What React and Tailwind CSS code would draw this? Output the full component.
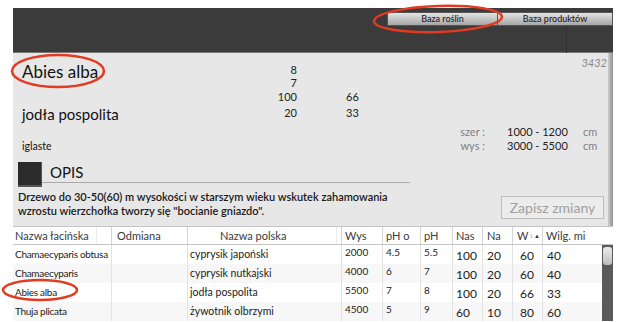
import React from 'react'

const rows = [
  { latin: 'Chamaecyparis obtusa', pl: 'cyprysik japoński', wys: '2000', pho: '4.5', ph: '5.5', nas: '100', na: '20', w: '60', wilg: '40' },
  { latin: 'Chamaecyparis', pl: 'cyprysik nutkajski', wys: '4000', pho: '6', ph: '7', nas: '100', na: '20', w: '60', wilg: '40' },
  { latin: 'Abies alba', pl: 'jodła pospolita', wys: '5500', pho: '7', ph: '8', nas: '100', na: '20', w: '66', wilg: '33' },
  { latin: 'Thuja plicata', pl: 'żywotnik olbrzymi', wys: '4500', pho: '5', ph: '9', nas: '60', na: '10', w: '80', wilg: '60' },
]

function TopBar() {
  return (
    <div className="h-[45px] bg-[#3b3b3b] border-b border-[#777] flex flex-col">
      <div className="flex justify-end pt-[4px]">
        <button className="w-[111px] h-[14px] bg-gradient-to-b from-[#e4e4e4] to-[#a6a6a6] border border-[#555] text-[9px] leading-[12px] text-[#222] font-medium">
          Baza roślin
        </button>
        <button className="w-[115px] h-[14px] bg-gradient-to-b from-[#e4e4e4] to-[#a6a6a6] border border-l-0 border-[#555] text-[9px] leading-[12px] text-[#222] font-medium">
          Baza produktów
        </button>
      </div>
      <div className="flex justify-end mt-[1px]">
        <div className="w-[1px] h-[26px] bg-[#303030] mr-[46px]" />
      </div>
    </div>
  )
}

function Details() {
  return (
    <div className="h-[173px] flex bg-[#e7e7e7]">
      <div className="flex-1 flex flex-col">
        <div className="h-[106px] flex">
          <div className="w-[190px] pl-[9px] flex flex-col text-[#111]">
            <div className="mt-[8px] text-[17px] leading-[22px]">Abies alba</div>
            <div className="mt-[21px] text-[15px] leading-[20px]">jodła pospolita</div>
            <div className="mt-[15px] text-[10.5px] leading-[14px]">iglaste</div>
          </div>
          <div className="w-[94px] flex flex-col text-right text-[11px] text-[#222]">
            <div className="h-[14px] leading-[14px] mt-[10px]">8</div>
            <div className="h-[14px] leading-[14px] mt-[-1px]">7</div>
            <div className="h-[14px] leading-[14px]">100</div>
            <div className="h-[14px] leading-[14px] mt-[2px]">20</div>
          </div>
          <div className="w-[20px] ml-[49px] flex flex-col text-[11px] text-[#222]">
            <div className="h-[14px] leading-[14px] mt-[37px]">66</div>
            <div className="h-[14px] leading-[14px] mt-[2px]">33</div>
          </div>
          <div className="flex-1 flex flex-col text-[11px]">
            <div className="mt-[3px] h-[14px] leading-[14px] text-right pr-[1px] italic text-[#8a8a8a]">3432</div>
            <div className="mt-[55px] flex h-[14px] leading-[14px]">
              <div className="w-[119px] text-right text-[#808080]">szer :</div>
              <div className="w-[76px] ml-[22px] text-[#222]">1000 - 1200</div>
              <div className="text-[#808080]">cm</div>
            </div>
            <div className="flex h-[14px] leading-[14px]">
              <div className="w-[119px] text-right text-[#808080]">wys :</div>
              <div className="w-[76px] ml-[22px] text-[#222]">3000 - 5500</div>
              <div className="text-[#808080]">cm</div>
            </div>
          </div>
        </div>
        <div className="mt-[3px] pl-[5px] flex">
          <div className="w-[24px] h-[25px] bg-[#2b2b2b] border-b-2 border-r border-[#555]" />
          <div className="w-[368px] h-[21px] border-b border-[#a9a9a9] pl-[8px] text-[15px] leading-[21px] text-[#111]">OPIS</div>
        </div>
        <div className="mt-[3px] flex">
          <div className="pl-[5px] text-[11px] leading-[14px] font-semibold text-[#1a1a1a]">
            Drzewo do 30-50(60) m wysokości w starszym wieku wskutek zahamowania
            <br />
            wzrostu wierzchołka tworzy się "bocianie gniazdo".
          </div>
          <button className="ml-auto mr-[4px] mt-[6px] w-[103px] h-[23px] border border-[#bdbdbd] bg-[#ececec] text-[14px] leading-[20px] text-[#a0a0a0]">
            Zapisz zmiany
          </button>
        </div>
      </div>
      <div className="w-[5px] bg-gradient-to-r from-[#cfcfcf] to-[#8f8f8f]" />
    </div>
  )
}

function HeaderRow() {
  return (
    <div className="h-[19px] flex bg-white border-t border-b border-[#c4c4c4] text-[11px] leading-[17px] text-[#3a3a3a]">
      <div className="w-[99px] flex border-r border-[#d4d4d4]">
        <div className="w-[84px] pl-[2px] border-r border-[#ececec] whitespace-nowrap">Nazwa łacińska</div>
      </div>
      <div className="w-[76px] pl-[5px] border-r border-[#d4d4d4]">Odmiana</div>
      <div className="w-[154px] flex border-r border-[#d4d4d4]">
        <div className="w-[149px] pl-[32px] border-r border-[#ececec]">Nazwa polska</div>
      </div>
      <div className="w-[41px] pl-[3px] border-r border-[#d4d4d4] whitespace-nowrap">Wys</div>
      <div className="w-[38px] pl-[3px] border-r border-[#d4d4d4] whitespace-nowrap">pH o</div>
      <div className="w-[32px] pl-[3px] border-r border-[#d4d4d4]">pH</div>
      <div className="w-[30px] pl-[3px] border-r border-[#d4d4d4] whitespace-nowrap">Nas</div>
      <div className="w-[30px] pl-[4px] border-r border-[#d4d4d4] whitespace-nowrap">Na</div>
      <div className="w-[30px] pl-[4px] border-r border-[#d4d4d4] flex items-center gap-[1px] whitespace-nowrap">
        <span>W</span>
        <span className="text-[6px] text-[#aaa]">1</span>
        <span className="text-[6px]">▲</span>
      </div>
      <div className="w-[70px] pl-[3px] whitespace-nowrap">Wilg. mi</div>
    </div>
  )
}

function Table() {
  return (
    <div className="flex flex-col">
      <HeaderRow />
      <div className="flex">
        <div className="w-[589px] flex flex-col">
          {rows.map((r, i) => (
            <div key={i} className={`h-[19px] flex text-[#222] ${i % 2 ? 'bg-[#f7f7f7]' : 'bg-white'}`}>
              <div className="w-[99px] pl-[2px] text-[10px] tracking-[-0.3px] leading-[18px] whitespace-nowrap border-r border-[#e2e2e2]">{r.latin}</div>
              <div className="w-[76px] border-r border-[#e2e2e2]" />
              <div className="w-[154px] pl-[2px] text-[10.5px] leading-[18px] whitespace-nowrap border-r border-[#e2e2e2]">{r.pl}</div>
              <div className="w-[41px] pl-[3px] text-[10px] leading-[15px] border-r border-[#e2e2e2]">{r.wys}</div>
              <div className="w-[38px] pl-[3px] text-[10px] leading-[15px] border-r border-[#e2e2e2]">{r.pho}</div>
              <div className="w-[32px] pl-[3px] text-[10px] leading-[15px] border-r border-[#e2e2e2]">{r.ph}</div>
              <div className="w-[30px] pl-[3px] text-[12px] leading-[22px] border-r border-[#e2e2e2]">{r.nas}</div>
              <div className="w-[30px] pl-[4px] text-[12px] leading-[22px] border-r border-[#e2e2e2]">{r.na}</div>
              <div className="w-[30px] pl-[7px] text-[12px] leading-[22px] border-r border-[#e2e2e2]">{r.w}</div>
              <div className="w-[59px] pl-[4px] text-[12px] leading-[22px]">{r.wilg}</div>
            </div>
          ))}
        </div>
        <div className="w-[11px] h-[76px] bg-[#5a5a5a] pt-[2px] px-[1px]">
          <div className="h-[18px] rounded-[3px] bg-gradient-to-b from-[#ececec] to-[#bdbdbd]" />
        </div>
      </div>
    </div>
  )
}

export default function App() {
  return (
    <div className="w-[620px] h-[322px] bg-white relative overflow-hidden font-['Lato',sans-serif]">
      <div className="ml-[13px] mt-[8px] w-[600px] flex flex-col">
        <TopBar />
        <Details />
        <Table />
      </div>
      <svg className="absolute inset-0 pointer-events-none" width="620" height="322">
        <ellipse cx="438" cy="19" rx="64" ry="13" fill="none" stroke="#e23b22" strokeWidth="2.5" transform="rotate(-2 438 19)" />
        <ellipse cx="58" cy="71" rx="46" ry="16" fill="none" stroke="#e23b22" strokeWidth="2.5" />
        <ellipse cx="40" cy="290" rx="37" ry="10" fill="none" stroke="#e23b22" strokeWidth="2.5" />
      </svg>
    </div>
  )
}
